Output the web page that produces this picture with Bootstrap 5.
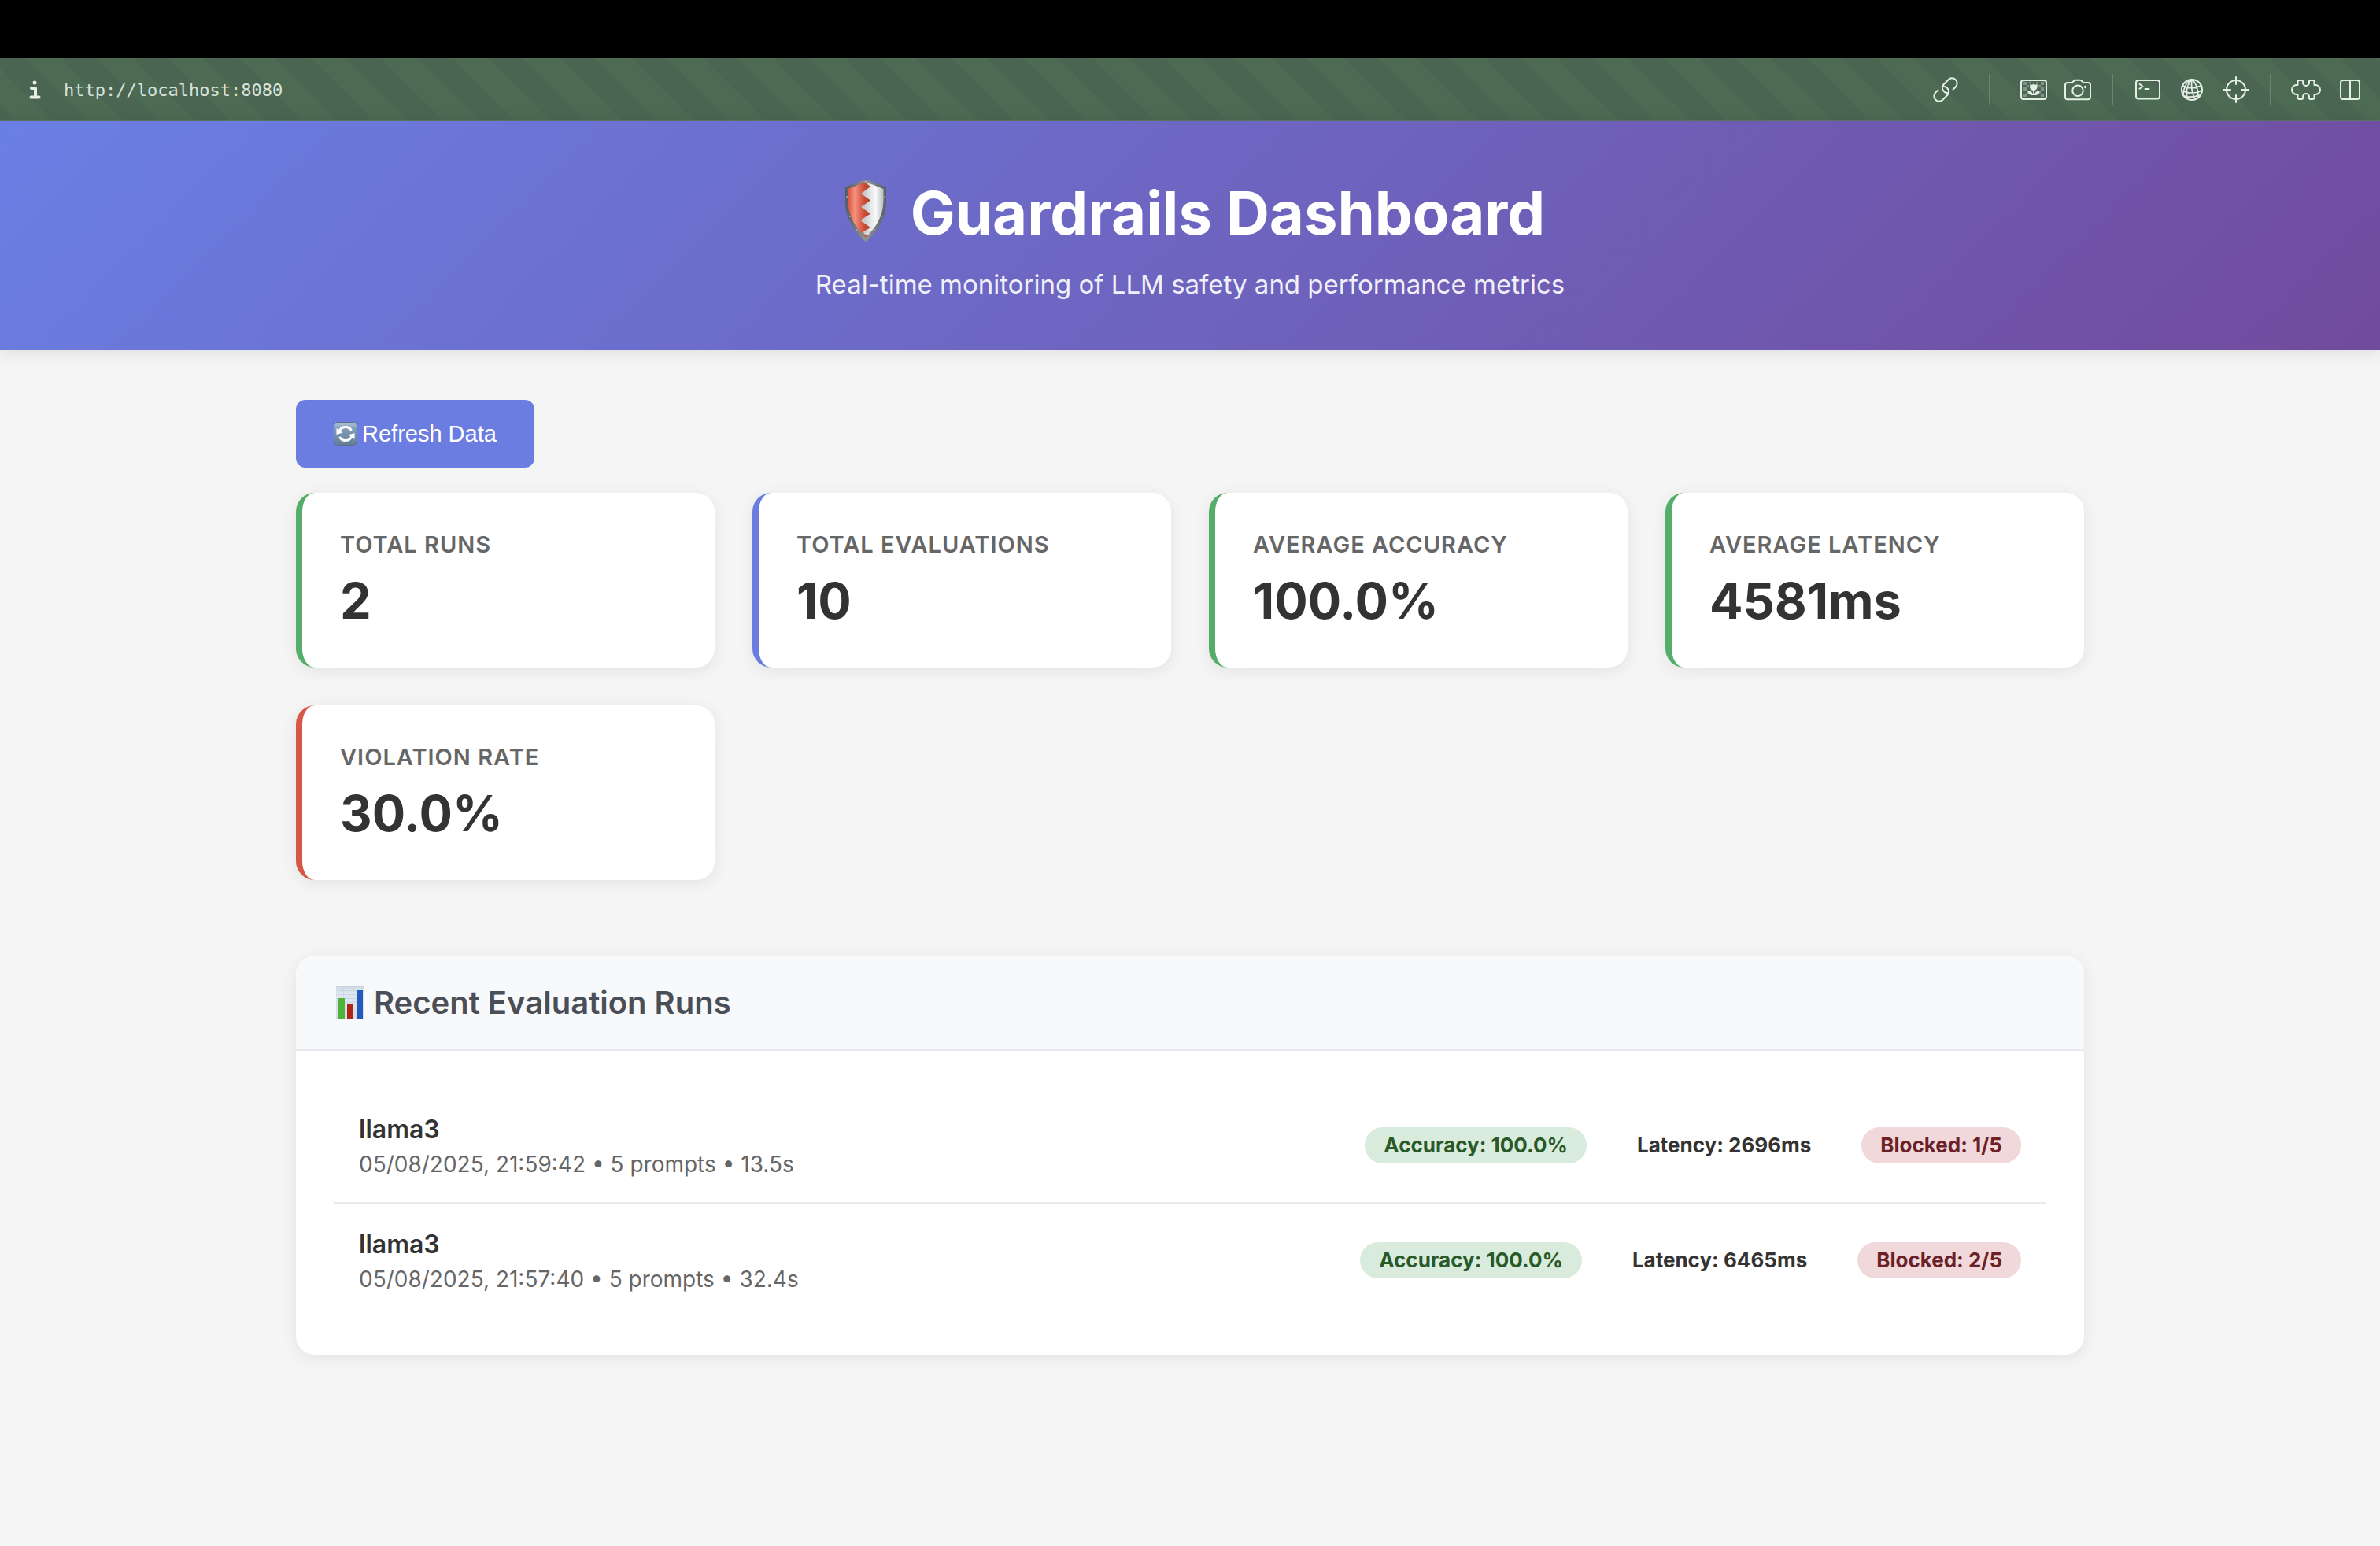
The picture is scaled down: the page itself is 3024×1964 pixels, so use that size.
<!DOCTYPE html>
<html lang="en">
<head>
<meta charset="utf-8">
<meta name="viewport" content="width=device-width, initial-scale=1">
<title>Guardrails Dashboard</title>
<link href="https://cdn.jsdelivr.net/npm/bootstrap@5.3.0/dist/css/bootstrap.min.css" rel="stylesheet">
<style>
  body { background: #f5f5f5; color: #333; font-family: Inter, "Liberation Sans", sans-serif; font-size: 29px; line-height: 36px; }
  .top-strip { height: 74px; background: #000; }

  .dev-bar { height: 80px; padding: 2px 10px 0 30px; border-bottom: 2px solid #5b7663; color: #e4efe6;
    background: repeating-linear-gradient(45deg, #4a6653 0 14px, #4d6a53 14px 46px, #4a6653 46px 64px); }
  .dev-address { font: 22px/32px "DejaVu Sans Mono", monospace; color: #d9e2db; margin-left: 23px; padding-top: 2px; }
  .tool { width: 56px; height: 56px; padding: 0; border: 0; background: none; color: inherit; display: flex; align-items: center; justify-content: center; }
  .tool-info { width: 28px; }
  .tool svg { flex: none; width: 40px; height: 40px; fill: none; stroke: currentColor; stroke-width: 2; stroke-linecap: round; stroke-linejoin: round; }
  .tool-split { width: 2px; height: 40px; margin: 0 16px 0 15px; background: #6a8571; }
  .tool-split-wide { margin: 0 27px; }

  .hero { position: relative; padding: 68px 64px 62px; color: #fff; background: linear-gradient(135deg, #6a7fe4 0%, #714b9d 100%); box-shadow: 0 4px 20px rgba(0, 0, 0, .1); }
  .hero h1 { font-size: 76px; line-height: 96px; font-weight: 700; gap: 18px; }
  .hero h1 svg { width: 78px; height: 88px; }
  .hero p { font-size: 33px; line-height: 42px; margin-top: 22px; opacity: .9; }

  .page { max-width: 2400px; padding: 64px; }
  .page-actions { margin-bottom: 32px; }
  .btn-refresh { font: 29px/38px "Liberation Sans", Arial, sans-serif; padding: 24px 48px; gap: 6px; border: 0; border-radius: 12px; color: #fff; background: #6b7de1; }
  .btn-refresh:hover { color: #fff; background: #5a6cd0; }
  .btn-refresh svg { width: 30px; height: 30px; }

  .stat-row { --bs-gutter-x: 48px; --bs-gutter-y: 48px; }
  .stat-card { border: 0; border-left: 8px solid #6b7de1; border-radius: 24px; padding: 48px; background: #fff; box-shadow: 0 4px 20px rgba(0, 0, 0, .08); }
  .stat-good { border-left-color: #55ad6a; }
  .stat-bad { border-left-color: #d65745; }
  .stat-label { font-size: 29px; line-height: 36px; font-weight: 600; letter-spacing: 1px; color: #666; margin-bottom: 16px; }
  .stat-value { font-size: 63px; line-height: 74px; font-weight: 700; }

  .runs { border: 0; border-radius: 24px; margin-top: 96px; overflow: hidden; box-shadow: 0 4px 20px rgba(0, 0, 0, .08); }
  .runs-head { padding: 34px 48px; background: #f8f9fb; border-bottom: 2px solid #e9eaef; }
  .runs-head h2 { font-size: 40px; line-height: 51px; font-weight: 600; color: #4a4f57; gap: 10px; }
  .runs-head svg { width: 41px; height: 42px; }
  .runs-body { padding: 48px; }
  .run { padding: 32px; border: 0; color: inherit; }
  .run + .run { border-top: 2px solid #e9eaf0; }
  .run-name { font-size: 32px; line-height: 40px; font-weight: 600; margin-bottom: 8px; }
  .run-meta { font-size: 28px; line-height: 32px; color: #666; }
  .run-facts { gap: 40px; }
  .fact { padding: 6px 24px; border-radius: 24px; font-size: 26px; line-height: 34px; font-weight: 700; }
  .fact-ok { background: #d9ebdc; color: #285929; }
  .fact-bad { background: #f1d8da; color: #6b2127; }
</style>
</head>
<body>
<div class="top-strip"></div>

<nav class="dev-bar d-flex align-items-center" aria-label="Developer toolbar">
  <button class="tool tool-info" type="button" aria-label="Site information">
    <svg viewBox="0 0 40 40"><g stroke-width="4"><path d="M16 18h5v11M15.500 29.500h10"/></g><circle cx="20" cy="11" r="2.500" fill="currentColor" stroke="none"/></svg>
  </button>
  <a class="dev-address text-decoration-none" href="http://localhost:8080">http://localhost:8080</a>
  <div class="d-flex align-items-center ms-auto">
    <button class="tool" type="button" aria-label="Copy link">
      <svg viewBox="0 0 40 40"><g transform="translate(20 20) rotate(-45)"><path d="M-7-6.500H-11.500a6.500 6.500 0 0 0 0 13H-3.500a6.500 6.500 0 0 0 4-11.600"/><path d="M7 6.500H11.500a6.500 6.500 0 0 0 0-13H3.500a6.500 6.500 0 0 0-4 11.600"/></g></svg>
    </button>
    <span class="tool-split tool-split-wide"></span>
    <button class="tool" type="button" aria-label="Capture image">
      <svg viewBox="0 0 40 40"><rect x="4" y="8" width="32" height="24" rx="3"/>
        <path stroke="none" fill="currentColor" opacity=".35" d="M7 10h4v4h-4zM7 17h4v4h-4zM7 25h4v4h-4zM11 14h3v3h-3zM11 21h3v4h-3zM29 10h4v4h-4zM29 17h4v4h-4zM29 25h4v4h-4zM26 14h3v3h-3zM26 21h3v4h-3zM14 10h3v2h-3zM23 10h3v2h-3z"/>
        <path stroke="none" fill="currentColor" d="M15.500 12.500l2.500 1.500L20 12l2 2 2.500-1.500v4.500a5 5 0 0 1-3.700 4V26c1-3 3.500-5 6.700-5 0 4-2.500 6-6 6h-3c-3.500 0-6-2-6-6 3.200 0 5.700 2 6.700 5v-5a5 5 0 0 1-4.200-4z"/></svg>
    </button>
    <button class="tool" type="button" aria-label="Take screenshot">
      <svg viewBox="0 0 40 40"><path d="M7 11h5.500c1.500 0 2-3.200 4.500-3.200h6c2.500 0 3 3.200 4.500 3.200H33a3 3 0 0 1 3 3v15.200a3 3 0 0 1-3 3H7a3 3 0 0 1-3-3V14a3 3 0 0 1 3-3z"/><circle cx="20" cy="21.300" r="6.800"/><circle cx="29.600" cy="16.500" r="1.700" fill="currentColor" stroke="none"/></svg>
    </button>
    <span class="tool-split"></span>
    <button class="tool" type="button" aria-label="Open console">
      <svg viewBox="0 0 40 40"><rect x="5" y="8" width="30" height="23.500" rx="3"/><path d="M9.500 12.800l4 3-4 3M16.500 19h5"/></svg>
    </button>
    <button class="tool" type="button" aria-label="Network">
      <svg viewBox="0 0 40 40"><circle cx="20" cy="20" r="13"/><path stroke-width="1.700" d="M20 7c-5 5-8 13-6 24M20 7c-1 8-1 16 4 25M21 7c4 5 7 12 7 22M19 7c-4 2-9 7-10 19M8.500 15c5 3 15 4 23 0M7 21c7 4 18 4 26 0M10 28c6 2 14 1 20-1"/></svg>
    </button>
    <button class="tool" type="button" aria-label="Inspect element">
      <svg viewBox="0 0 40 40"><circle cx="20" cy="20" r="12"/><path d="M20 4v9M20 27v9M4 20h9M27 20h9"/></svg>
    </button>
    <span class="tool-split"></span>
    <button class="tool" type="button" aria-label="Extensions">
      <svg viewBox="0 0 40 40"><path d="M9.500 10q0-2 2-2h3q1.500 0 1.500 1.500v1.500a4 4 0 0 0 8 0v-1.500q0-1.500 1.500-1.500h3q2 0 2 2v4h1.500a6 6 0 0 1 0 12h-1.500v4q0 2-2 2h-3q-1.500 0-1.500-1.500v-1.500a4 4 0 0 0-8 0v1.500q0 1.500-1.500 1.500h-3q-2 0-2-2v-4h-1.500a6 6 0 0 1 0-12h1.500z"/></svg>
    </button>
    <button class="tool" type="button" aria-label="Split view">
      <svg viewBox="0 0 40 40"><rect x="8" y="8" width="24" height="24" rx="3"/><path d="M20 8v24"/></svg>
    </button>
  </div>
</nav>

<header class="hero text-center">
  <h1 class="d-flex justify-content-center align-items-center mb-0">
    <svg viewBox="0 0 78 88" aria-hidden="true">
      <defs>
        <linearGradient id="steel" x1="0" x2="1"><stop offset="0" stop-color="#555b60"/><stop offset=".5" stop-color="#8f9496"/><stop offset="1" stop-color="#596065"/></linearGradient>
        <linearGradient id="red" x1="0" x2="1"><stop offset="0" stop-color="#d9553f"/><stop offset=".3" stop-color="#f5927f"/><stop offset=".7" stop-color="#cf5039"/><stop offset="1" stop-color="#a93a26"/></linearGradient>
        <linearGradient id="silver" x1="0" x2="1"><stop offset="0" stop-color="#b9bcc2"/><stop offset=".65" stop-color="#fafafa"/><stop offset="1" stop-color="#b9bfc4"/></linearGradient>
      </defs>
      <path fill="url(#steel)" d="M13 11.500C22 9 31 3 39 3s17 6 26 8.500V29c0 23-13 42-26 52C26 71 13 52 13 29z"/>
      <path fill="url(#silver)" d="M39 6.500c8 .500 15 5 22.500 7.500V29c0 20-11 36-22.500 46.500L33 62V14z"/>
      <path fill="url(#red)" d="M16.500 14C24 11.500 31 7 39 6.500l6 4.500-12 9 12 8.500-12 8.500 12 8.500L32 54l13 9-12 7 8 3-2 2.500C27.500 65 16.500 49 16.500 29z"/>
      <g fill="#a9adaf"><circle cx="39" cy="4.800" r="1"/><circle cx="15" cy="24" r="1"/><circle cx="63" cy="24" r="1"/><circle cx="19" cy="49" r="1"/><circle cx="59" cy="49" r="1"/><circle cx="28" cy="66" r="1"/><circle cx="50" cy="66" r="1"/></g>
    </svg>
    <span>Guardrails Dashboard</span>
  </h1>
  <p class="mb-0">Real-time monitoring of LLM safety and performance metrics</p>
</header>

<main class="page mx-auto">
  <div class="page-actions d-flex">
    <button class="btn btn-refresh d-inline-flex align-items-center" type="button">
      <svg viewBox="0 0 30 30" aria-hidden="true">
        <defs><linearGradient id="tile" x2="0" y2="1"><stop offset="0" stop-color="#b5c6d8"/><stop offset=".3" stop-color="#7f9bb9"/><stop offset="1" stop-color="#647d96"/></linearGradient></defs>
        <rect x=".5" y=".5" width="29" height="29" rx="5" fill="url(#tile)" stroke="#58708b"/>
        <g fill="none" stroke="#fff" stroke-width="3"><path d="M7 12a8.500 8.500 0 0 1 15.500-1"/><path d="M23 18a8.500 8.500 0 0 1-15.500 1"/></g>
        <path fill="#fff" d="M3.500 8v8l8-2.500zM26.500 22v-8l-8 2.500z"/>
      </svg>
      <span>Refresh Data</span>
    </button>
  </div>

  <section class="row stat-row row-cols-4" aria-label="Summary">
    <div class="col"><div class="stat-card stat-good"><div class="stat-label text-uppercase">Total Runs</div><div class="stat-value">2</div></div></div>
    <div class="col"><div class="stat-card"><div class="stat-label text-uppercase">Total Evaluations</div><div class="stat-value">10</div></div></div>
    <div class="col"><div class="stat-card stat-good"><div class="stat-label text-uppercase">Average Accuracy</div><div class="stat-value">100.0%</div></div></div>
    <div class="col"><div class="stat-card stat-good"><div class="stat-label text-uppercase">Average Latency</div><div class="stat-value">4581ms</div></div></div>
    <div class="col"><div class="stat-card stat-bad"><div class="stat-label text-uppercase">Violation Rate</div><div class="stat-value">30.0%</div></div></div>
  </section>

  <section class="card runs">
    <div class="runs-head">
      <h2 class="d-flex align-items-center mb-0">
        <svg viewBox="0 0 41 42" aria-hidden="true">
          <defs><linearGradient id="paper" x2="0" y2="1"><stop offset="0" stop-color="#cfd9e2"/><stop offset=".2" stop-color="#dfe8f0"/><stop offset="1" stop-color="#d5dde6"/></linearGradient></defs>
          <rect x="3" y="0" width="36" height="42" fill="url(#paper)"/>
          <path stroke="#c3ced9" stroke-width="1" opacity=".6" d="M3 .5h36M3 5.500h36M3 10.500h36M3 15.500h36M3 20.500h36M12.500 0v42M24.500 0v42"/>
          <rect x="5" y="15" width="9" height="27" fill="#4fb43b"/><rect x="17" y="22" width="8" height="20" fill="#b02418"/><rect x="29" y="5" width="8" height="37" fill="#2459be"/>
        </svg>
        <span>Recent Evaluation Runs</span>
      </h2>
    </div>
    <div class="runs-body list-group list-group-flush">
      <div class="run d-flex justify-content-between align-items-center">
        <div><div class="run-name">llama3</div><div class="run-meta">05/08/2025, 21:59:42 • 5 prompts • 13.5s</div></div>
        <div class="run-facts d-flex"><span class="fact fact-ok">Accuracy: 100.0%</span><span class="fact">Latency: 2696ms</span><span class="fact fact-bad">Blocked: 1/5</span></div>
      </div>
      <div class="run d-flex justify-content-between align-items-center">
        <div><div class="run-name">llama3</div><div class="run-meta">05/08/2025, 21:57:40 • 5 prompts • 32.4s</div></div>
        <div class="run-facts d-flex"><span class="fact fact-ok">Accuracy: 100.0%</span><span class="fact">Latency: 6465ms</span><span class="fact fact-bad">Blocked: 2/5</span></div>
      </div>
    </div>
  </section>
</main>
<script src="https://cdn.jsdelivr.net/npm/bootstrap@5.3.0/dist/js/bootstrap.bundle.min.js"></script>
</body>
</html>
